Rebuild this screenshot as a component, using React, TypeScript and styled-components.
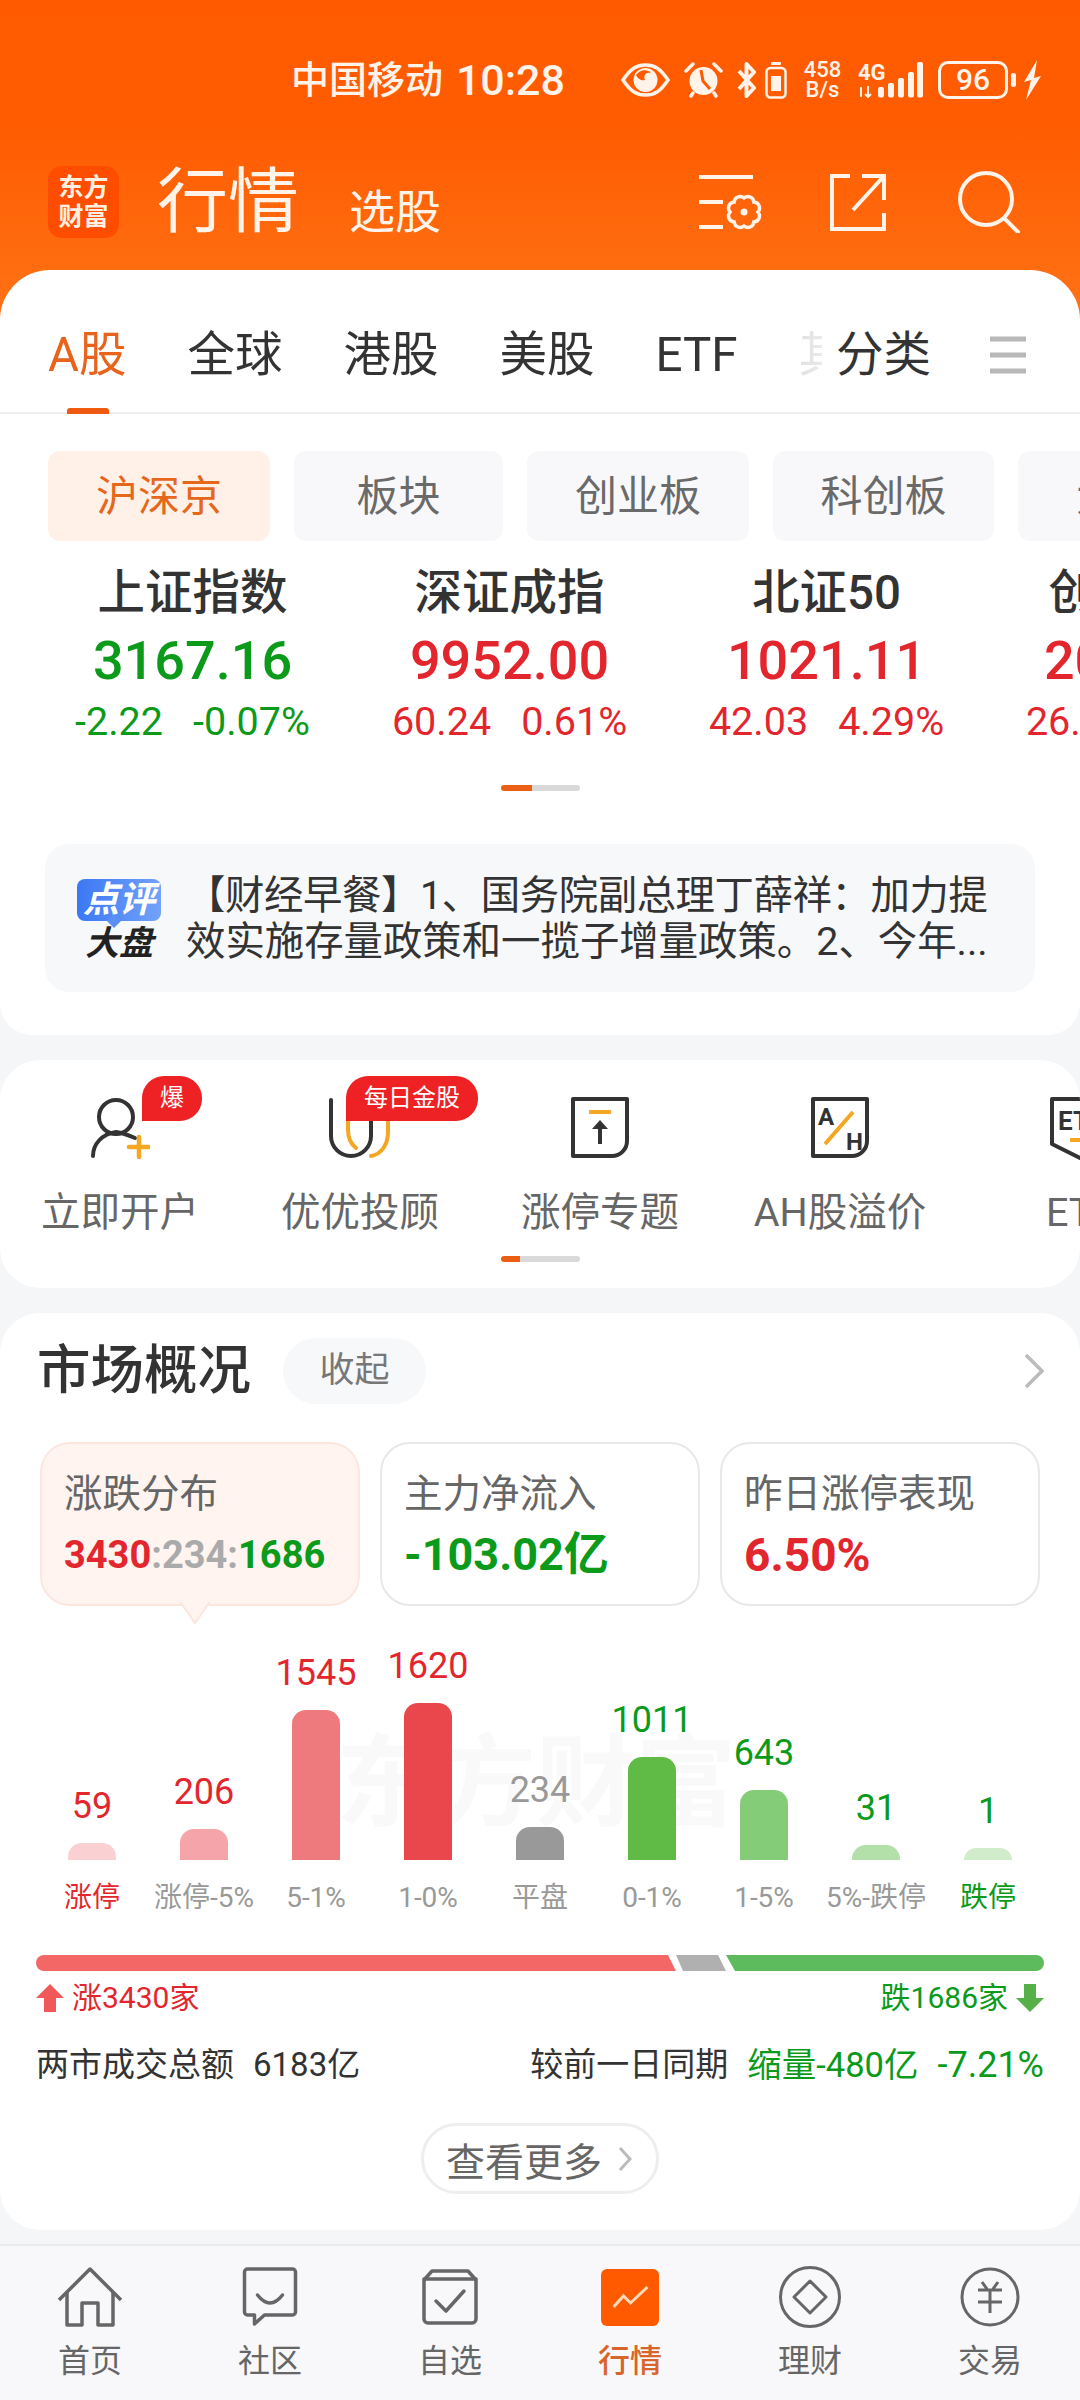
import React from 'react'
import styled, { createGlobalStyle } from 'styled-components'

const RED = '#e3262d'
const GREEN = '#0b9a1a'
const INK = '#333'

const GlobalStyle = createGlobalStyle`
  html, body {
    margin: 0;
    padding: 0;
    background: #f5f6f8;
  }
  body {
    font-family: Roboto, "Noto Sans CJK SC", sans-serif;
  }
`

const Page = styled.div`
  width: 1080px;
  height: 2400px;
  overflow: hidden;
  display: flex;
  flex-direction: column;
  background: linear-gradient(#ff5a00 0, #ff5c02 130px, #ff7417 330px, #f5f6f8 330px);
`

const Header = styled.header`
  height: 270px;
  flex-shrink: 0;
  padding-top: 60px;
  box-sizing: border-box;
`

const StatusBar = styled.div`
  height: 40px;
  display: flex;
  justify-content: flex-end;
  align-items: center;
  padding-right: 38px;
  color: #fff3ea;
`

const Carrier = styled.span`
  font-size: 38px;
  font-weight: 500;
  line-height: 48px;
  white-space: nowrap;
`

const Clock = styled.span`
  font-size: 43px;
  font-weight: 500;
  line-height: 48px;
  margin: 0 56px 0 13px;
  white-space: nowrap;
`

const StatusIcon = styled.svg<{ $ml?: number }>`
  display: block;
  flex-shrink: 0;
  margin-left: ${(p) => p.$ml || 0}px;
`

const Speed = styled.div`
  width: 39px;
  margin-left: 16px;
  font-size: 22px;
  line-height: 20px;
  font-weight: 500;
  text-align: center;
  white-space: nowrap;
`

const BatteryBox = styled.div`
  width: 70px;
  height: 38px;
  margin-left: 14px;
  box-sizing: border-box;
  border: 3px solid #fff3ea;
  border-radius: 10px;
  font-size: 30px;
  font-weight: 500;
  line-height: 32px;
  text-align: center;
  position: relative;

  &::after {
    content: '';
    position: absolute;
    right: -11px;
    top: 9px;
    width: 5px;
    height: 14px;
    border-radius: 2px;
    background: #fff3ea;
  }
`

const Toolbar = styled.div`
  height: 72px;
  margin-top: 66px;
  padding: 0 60px 0 48px;
  display: flex;
  align-items: center;
  color: #fff3ea;
`

const Logo = styled.div`
  width: 71px;
  height: 72px;
  border-radius: 14px;
  background: #ff4d00;
  color: #fff0e0;
  font-size: 25px;
  font-weight: 700;
  line-height: 29px;
  text-align: center;
  display: flex;
  align-items: center;
  justify-content: center;
`

const PageTitle = styled.div`
  margin-left: 38px;
  font-size: 71px;
  line-height: 72px;
  width: 142px;
  white-space: nowrap;
`

const SubTitle = styled.div`
  margin-left: 50px;
  margin-top: 20px;
  font-size: 46px;
  line-height: 54px;
  white-space: nowrap;
`

const ToolIcons = styled.div`
  margin-left: auto;
  display: flex;
  align-items: center;
`

const Sheet = styled.section`
  flex-shrink: 0;
  height: 765px;
  background: #fff;
  border-radius: 50px 50px 32px 32px;
  overflow: hidden;
`

const TabBar = styled.div`
  height: 144px;
  box-sizing: border-box;
  padding: 57px 54px 0 48px;
  border-bottom: 2px solid #eee;
  display: flex;
  align-items: flex-start;
  position: relative;
`

const TabScroll = styled.div`
  width: 774px;
  display: flex;
  gap: 61px;
  overflow: hidden;
  flex-shrink: 0;
  -webkit-mask-image: linear-gradient(to right, #000 730px, rgba(0, 0, 0, 0.15) 752px, rgba(0, 0, 0, 0.1) 774px);
  mask-image: linear-gradient(to right, #000 730px, rgba(0, 0, 0, 0.15) 752px, rgba(0, 0, 0, 0.1) 774px);
`

const Tab = styled.div<{ $active?: boolean }>`
  position: relative;
  font-size: 47.5px;
  line-height: 56px;
  color: ${(p) => (p.$active ? '#e8641c' : INK)};
  white-space: nowrap;
  flex-shrink: 0;
`

const TabUnderline = styled.span`
  position: absolute;
  left: 67px;
  bottom: -2px;
  width: 42px;
  height: 6px;
  border-radius: 3px 3px 0 0;
  background: #ee5a10;
`

const FixedTab = styled(Tab)`
  margin-left: 14px;
`

const TabMenu = styled.svg`
  margin-left: auto;
  margin-top: 9px;
  display: block;
`

const PillRow = styled.div`
  margin-top: 37px;
  padding-left: 48px;
  display: flex;
  gap: 24px;
  overflow: hidden;
`

const Pill = styled.div<{ $active?: boolean; $w: number }>`
  flex-shrink: 0;
  width: ${(p) => p.$w}px;
  height: 90px;
  border-radius: 12px;
  background: ${(p) => (p.$active ? '#fff0e8' : '#f8f8fa')};
  color: ${(p) => (p.$active ? '#e5671a' : '#6a6a6a')};
  font-size: 42px;
  line-height: 92px;
  text-align: center;
  white-space: nowrap;
`

const IndexRow = styled.div`
  margin-top: 22px;
  margin-left: 34px;
  display: flex;
  overflow: hidden;
`

const IndexCol = styled.div`
  width: 317px;
  flex-shrink: 0;
  text-align: center;
  white-space: nowrap;
`

const IndexName = styled.div`
  font-size: 47.5px;
  line-height: 60px;
  font-weight: 500;
  color: ${INK};
`

const IndexValue = styled.div<{ $color: string }>`
  margin-top: 3px;
  font-size: 54px;
  line-height: 70px;
  font-weight: 500;
  color: ${(p) => p.$color};
`

const IndexChange = styled.div<{ $color: string }>`
  margin-top: 4px;
  font-size: 39.5px;
  line-height: 44px;
  color: ${(p) => p.$color};
  display: flex;
  justify-content: center;
  gap: 30px;
`

const Scroller = styled.div<{ $mt: number; $fill: number }>`
  width: 79px;
  height: 6px;
  margin: ${(p) => p.$mt}px auto 0;
  border-radius: 3px;
  background: linear-gradient(
    to right,
    #ea5f14 ${(p) => p.$fill}px,
    #d9d9d9 ${(p) => p.$fill}px
  );
`

const NewsCard = styled.div`
  margin: 53px 45px 0;
  height: 148px;
  border-radius: 24px;
  background: #f7f8fa;
  display: flex;
  padding-left: 32px;
`

const NewsBadge = styled.div`
  width: 84px;
  flex-shrink: 0;
  padding-top: 35px;
`

const NewsBubble = styled.div`
  position: relative;
  height: 42px;
  border-radius: 8px;
  background: linear-gradient(to right, #3c78f5, #72a2f8);
  color: #fff;
  font-size: 36px;
  font-weight: 700;
  font-style: italic;
  line-height: 42px;
  text-align: center;

  &::after {
    content: '';
    position: absolute;
    left: 32px;
    bottom: -5px;
    width: 10px;
    height: 10px;
    background: #5a90f6;
    transform: rotate(45deg);
  }
`

const NewsMarket = styled.div`
  margin-top: 6px;
  color: #222;
  font-size: 34px;
  font-weight: 700;
  font-style: italic;
  line-height: 32px;
  text-align: center;
`

const NewsText = styled.div`
  margin-left: 25px;
  padding-top: 29px;
  width: 810px;
  font-size: 39.4px;
  line-height: 46px;
  color: ${INK};
  white-space: nowrap;
`

const NewsLine = styled.div<{ $tight?: boolean }>`
  letter-spacing: ${(p) => (p.$tight ? '-0.4px' : 0)};
`

const Card = styled.section<{ $mt: number }>`
  margin-top: ${(p) => p.$mt}px;
  flex-shrink: 0;
  background: #fff;
  border-radius: 40px;
  overflow: hidden;
`

const ShortcutCard = styled(Card)`
  padding-bottom: 26px;
`

const ShortcutRow = styled.div`
  display: flex;
  overflow: hidden;
`

const Shortcut = styled.div`
  position: relative;
  width: 240px;
  flex-shrink: 0;
  padding-top: 36px;
  display: flex;
  flex-direction: column;
  align-items: center;
`

const ShortcutIcon = styled.svg`
  display: block;
  height: 64px;
`

const ShortcutLabel = styled.div`
  margin-top: 29px;
  font-size: 39.5px;
  line-height: 48px;
  color: #666;
  white-space: nowrap;
`

const CornerBadge = styled.span<{ $left: number; $w: number }>`
  position: absolute;
  left: ${(p) => p.$left}px;
  top: 16px;
  width: ${(p) => p.$w}px;
  height: 45px;
  border-radius: 22px 22px 22px 0;
  background: #ee2225;
  color: #fff;
  font-size: 24px;
  line-height: 45px;
  text-align: center;
  white-space: nowrap;
`

const SectionHead = styled.div`
  padding: 25px 36px 0 37px;
  height: 66px;
  display: flex;
  align-items: center;
`

const SectionTitle = styled.h2`
  margin: 0;
  font-size: 53.5px;
  font-weight: 500;
  line-height: 66px;
  color: ${INK};
`

const CollapseBtn = styled.div`
  margin-left: 32px;
  width: 143px;
  height: 66px;
  border-radius: 33px;
  background: #f7f8fa;
  color: #777;
  font-size: 35px;
  line-height: 66px;
  text-align: center;
`

const HeadChevron = styled.svg`
  margin-left: auto;
  display: block;
`

const MetricRow = styled.div`
  margin-top: 38px;
  padding: 0 40px;
  display: flex;
  gap: 20px;
`

const Metric = styled.div<{ $active?: boolean }>`
  position: relative;
  width: 320px;
  height: 164px;
  box-sizing: border-box;
  padding: 28px 0 0 22px;
  border-radius: 30px;
  border: 2px solid ${(p) => (p.$active ? '#fbe7de' : '#e8e8e8')};
  background: ${(p) => (p.$active ? '#fff4f0' : '#fff')};

  ${(p) =>
    p.$active &&
    `
    &::after {
      content: '';
      position: absolute;
      left: 140px;
      bottom: -12px;
      width: 24px;
      height: 24px;
      background: #fff4f0;
      border-right: 2px solid #fbe7de;
      border-bottom: 2px solid #fbe7de;
      transform: rotate(45deg) skew(10deg, 10deg);
    }
  `};
`

const MetricTitle = styled.div`
  font-size: 38.5px;
  line-height: 44px;
  color: #666;
  white-space: nowrap;
`

const MetricValue = styled.div<{ $color?: string; $size?: number }>`
  margin-top: 13px;
  font-size: ${(p) => p.$size || 46}px;
  line-height: 52px;
  font-weight: 700;
  color: ${(p) => p.$color || INK};
  white-space: nowrap;
`

const Part = styled.span<{ $color: string }>`
  color: ${(p) => p.$color};
`

const Chart = styled.div`
  position: relative;
  height: 310px;
  padding-left: 36px;
  display: flex;
  align-items: flex-end;
`

const Watermark = styled.div`
  position: absolute;
  left: 336px;
  top: 118px;
  font-size: 100px;
  line-height: 120px;
  font-weight: 700;
  color: #f9f9f9;
  white-space: nowrap;
`

const BarCol = styled.div`
  position: relative;
  width: 112px;
  display: flex;
  flex-direction: column;
  align-items: center;
`

const BarValue = styled.div<{ $color: string }>`
  font-size: 36px;
  line-height: 44px;
  margin-bottom: 15px;
  color: ${(p) => p.$color};
`

const Bar = styled.div<{ $h: number; $color: string }>`
  width: 48px;
  height: ${(p) => p.$h}px;
  border-radius: 14px 14px 0 0;
  background: ${(p) => p.$color};
`

const BarLabel = styled.div<{ $color: string }>`
  margin-top: 20px;
  font-size: 28px;
  line-height: 36px;
  color: ${(p) => p.$color};
  white-space: nowrap;
`

const RatioBar = styled.div`
  position: relative;
  margin: 39px 36px 0;
  height: 16px;
  display: flex;
`

const RatioPart = styled.div<{ $w: number; $color: string; $clip: string; $radius?: string }>`
  width: ${(p) => p.$w}px;
  height: 16px;
  flex-shrink: 0;
  background: ${(p) => p.$color};
  border-radius: ${(p) => p.$radius || 0};
  clip-path: ${(p) => p.$clip};
`

const RatioLabels = styled.div`
  margin: 9px 36px 0;
  display: flex;
  justify-content: space-between;
  font-size: 30px;
  line-height: 36px;
`

const RatioLabel = styled.div<{ $color: string }>`
  display: flex;
  align-items: center;
  gap: 8px;
  color: ${(p) => p.$color};
`

const StatsRow = styled.div`
  margin: 29px 36px 0 36px;
  display: flex;
  justify-content: space-between;
  align-items: center;
  font-size: 33px;
  line-height: 40px;
  color: ${INK};
  white-space: nowrap;
`

const Stat = styled.div`
  display: flex;
  align-items: center;
  gap: 19px;
`

const StatGreen = styled.span<{ $size: number }>`
  font-size: ${(p) => p.$size}px;
  color: ${GREEN};
`

const MoreBtn = styled.div`
  width: 238px;
  height: 71px;
  margin: 38px auto 36px;
  box-sizing: border-box;
  border: 3px solid #eee;
  border-radius: 36px;
  padding-left: 22px;
  display: flex;
  align-items: center;
  gap: 16px;
  color: #666;
  font-size: 39px;
  white-space: nowrap;
`

const BottomNav = styled.nav`
  margin-top: 14px;
  flex: 1;
  display: flex;
  background: #f8f8fa;
  border-top: 2px solid #ebebeb;
  box-sizing: border-box;
  padding-top: 20px;
`

const NavItem = styled.div`
  width: 180px;
  display: flex;
  flex-direction: column;
  align-items: center;
`

const NavIconBox = styled.div`
  height: 62px;
  display: flex;
  align-items: center;
  justify-content: center;
`

const NavLabel = styled.div<{ $active?: boolean }>`
  margin-top: 13px;
  font-size: 32px;
  line-height: 40px;
  font-weight: ${(p) => (p.$active ? 500 : 400)};
  color: ${(p) => (p.$active ? '#d8652a' : '#666')};
`

const ActiveNavIcon = styled.div`
  width: 58px;
  height: 57px;
  border-radius: 6px;
  background: #ff5a00;
`

const tint = '#fff3ea'

const flowerPath = (cx: number, cy: number) => {
  const lobes = 8
  const r = 14
  let d = ''
  for (let i = 0; i <= lobes; i++) {
    const a = (i / lobes) * Math.PI * 2
    const x = (cx + Math.cos(a) * r).toFixed(1)
    const y = (cy + Math.sin(a) * r).toFixed(1)
    d += i === 0 ? `M${x} ${y}` : `A6 6 0 0 1 ${x} ${y}`
  }
  return d + 'Z'
}

const NavHome = () => (
  <svg width="64" height="60" viewBox="0 0 64 60" fill="none" stroke="#666" strokeWidth="3.5" strokeLinejoin="round">
    <path d="M1 33 L32 2 L63 33" />
    <path d="M9 25 V58 H24 V36 H40 V58 H55 V25" />
  </svg>
)

const NavCommunity = () => (
  <svg width="57" height="60" viewBox="0 0 56 60" fill="none" stroke="#666" strokeWidth="3.5" strokeLinejoin="round">
    <path d="M5 2 H50 A3 3 0 0 1 53 5 V45 A3 3 0 0 1 50 48 H22 L12 57 V48 H5 A3 3 0 0 1 2 45 V5 A3 3 0 0 1 5 2Z" />
    <path d="M15 28 Q27.5 44 40 28" strokeLinecap="round" />
  </svg>
)

const NavWatch = () => (
  <svg width="56" height="56" viewBox="0 0 56 56" fill="none" stroke="#666" strokeWidth="3.5" strokeLinejoin="round">
    <path d="M2 10 H54 V50 A4 4 0 0 1 50 54 H6 A4 4 0 0 1 2 50Z" />
    <path d="M2 11 L10 2 H46 L54 11" />
    <path d="M14 32 L24 42 L42 22" strokeLinecap="round" />
  </svg>
)

const NavFinance = () => (
  <svg width="64" height="64" viewBox="-32 -32 64 64" fill="none" stroke="#666" strokeWidth="3">
    <circle r="29.5" />
    <path d="M0 -16 L16 0 L0 16 L-16 0Z" strokeLinejoin="round" />
  </svg>
)

const NavTrade = () => (
  <svg width="60" height="60" viewBox="-30 -30 60 60" fill="none" stroke="#666" strokeWidth="3">
    <circle r="28" />
    <path d="M-8 -15 L-3 -8 M8 -15 L3 -8 M-12 -7 H12 M-12 5 H12 M0 -7 V16" />
  </svg>
)

const bars = [
  { value: '59', h: 17, color: '#fbd0d3', text: RED, label: '涨停', labelColor: RED },
  { value: '206', h: 31, color: '#f5a5a9', text: RED, label: '涨停-5%', labelColor: '#999' },
  { value: '1545', h: 150, color: '#ee7a7e', text: RED, label: '5-1%', labelColor: '#999' },
  { value: '1620', h: 157, color: '#e9474b', text: RED, label: '1-0%', labelColor: '#999' },
  { value: '234', h: 33, color: '#999', text: '#999', label: '平盘', labelColor: '#999' },
  { value: '1011', h: 103, color: '#5fbb46', text: GREEN, label: '0-1%', labelColor: '#999' },
  { value: '643', h: 70, color: '#85cc78', text: GREEN, label: '1-5%', labelColor: '#999' },
  { value: '31', h: 15, color: '#b2e0a8', text: GREEN, label: '5%-跌停', labelColor: '#999' },
  { value: '1', h: 12, color: '#d0eccb', text: GREEN, label: '跌停', labelColor: GREEN },
]

const indexes = [
  { name: '上证指数', value: '3167.16', a: '-2.22', b: '-0.07%', color: GREEN },
  { name: '深证成指', value: '9952.00', a: '60.24', b: '0.61%', color: RED },
  { name: '北证50', value: '1021.11', a: '42.03', b: '4.29%', color: RED },
  { name: '创业板指', value: '2023.48', a: '26.11', b: '1.31%', color: RED },
]

const pills = [
  { label: '沪深京', w: 222, active: true },
  { label: '板块', w: 209 },
  { label: '创业板', w: 222 },
  { label: '科创板', w: 221 },
  { label: '大盘', w: 200 },
]

const App = () => {
  return (
    <Page>
      <GlobalStyle />
      <Header>
        <StatusBar>
          <Carrier>中国移动</Carrier>
          <Clock>10:28</Clock>
          <StatusIcon width="49" height="34" viewBox="0 0 49 34">
            <path d="M2 17 C10 5 16 2 24.5 2 C33 2 39 5 47 17 C39 29 33 32 24.5 32 C16 32 10 29 2 17Z" fill="none" stroke={tint} strokeWidth="3.5" />
            <circle cx="24.5" cy="17" r="12" fill={tint} />
            <path d="M15 12 C19 6 27 6 30 10 C25 9 22 12 24 17 C20 18 17 16 15 12Z" fill="#ff5a00" />
          </StatusIcon>
          <StatusIcon $ml={14} width="39" height="36" viewBox="0 0 39 36">
            <circle cx="19.5" cy="19" r="14" fill={tint} />
            <path d="M17 8 L19 19 L26 27" fill="none" stroke="#ff5a00" strokeWidth="3" />
            <path d="M2 9 L9 2 M37 9 L30 2 M7 34 L9 31 M32 34 L30 31" stroke={tint} strokeWidth="3.5" strokeLinecap="round" />
          </StatusIcon>
          <StatusIcon $ml={14} width="19" height="36" viewBox="0 0 19 36">
            <path d="M2 9 L17 26 L9.5 34 V2 L17 10 L2 27" fill="none" stroke={tint} strokeWidth="4" strokeLinejoin="round" />
          </StatusIcon>
          <StatusIcon $ml={9} width="22" height="37" viewBox="0 0 22 37">
            <rect x="6" y="0" width="10" height="3" rx="1" fill={tint} />
            <rect x="1.5" y="6" width="19" height="29.5" rx="4" fill="none" stroke={tint} strokeWidth="2.5" />
            <rect x="6" y="14" width="10" height="15" fill={tint} />
          </StatusIcon>
          <Speed>
            458
            <br />
            B/s
          </Speed>
          <StatusIcon $ml={16} width="66" height="36" viewBox="0 0 66 36">
            <text x="0" y="18" fontSize="22" fontWeight="700" fill={tint} fontFamily="Roboto, sans-serif">
              4G
            </text>
            <path d="M3 25 V35 M10 24 V35 M7 32 L10 35 L13 32" stroke={tint} strokeWidth="2" fill="none" />
            <rect x="20" y="25" width="6" height="10.5" rx="2" fill={tint} />
            <rect x="30" y="21" width="6" height="14.5" rx="2" fill={tint} />
            <rect x="40" y="16" width="6" height="19.5" rx="2" fill={tint} />
            <rect x="50" y="10" width="6" height="25.5" rx="2" fill={tint} />
            <rect x="59" y="0" width="6" height="35.5" rx="2" fill={tint} />
          </StatusIcon>
          <BatteryBox>96</BatteryBox>
          <StatusIcon $ml={15} width="19" height="40" viewBox="0 0 19 40">
            <path d="M14 0 L1 22 L8 20 L3 40 L18 16 L11 18Z" fill={tint} />
          </StatusIcon>
        </StatusBar>
        <Toolbar>
          <Logo>
            东方
            <br />
            财富
          </Logo>
          <PageTitle>行情</PageTitle>
          <SubTitle>选股</SubTitle>
          <ToolIcons>
            <svg width="67" height="56" viewBox="0 0 67 56" fill="none" stroke={tint} strokeWidth="4">
              <path d="M1 3 H55 M1 28 H25 M1 53 H25" />
              <path d={flowerPath(46, 38)} strokeWidth="3.5" />
              <circle cx="46" cy="38" r="3.5" fill={tint} stroke="none" />
            </svg>
            <svg style={{ marginLeft: 65 }} width="56" height="57" viewBox="0 0 56 57" fill="none" stroke={tint} strokeWidth="4">
              <path d="M20 2 H2 V55 H54 V39" />
              <path d="M32 2 H54 V26 M54 2 L23 36" />
            </svg>
            <svg style={{ marginLeft: 72 }} width="62" height="62" viewBox="0 0 62 62" fill="none" stroke={tint} strokeWidth="4">
              <circle cx="28" cy="28" r="26" />
              <path d="M46 47 L60 61" strokeLinecap="round" />
            </svg>
          </ToolIcons>
        </Toolbar>
      </Header>

      <Sheet>
        <TabBar>
          <TabScroll>
            <Tab $active>A股</Tab>
            <Tab>全球</Tab>
            <Tab>港股</Tab>
            <Tab>美股</Tab>
            <Tab>ETF</Tab>
            <Tab>其他</Tab>
          </TabScroll>
          <FixedTab>分类</FixedTab>
          <TabMenu width="36" height="38" viewBox="0 0 36 38" stroke="#b8b8b8" strokeWidth="5">
            <path d="M0 3 H36 M0 19 H36 M0 35 H36" />
          </TabMenu>
          <TabUnderline />
        </TabBar>
        <PillRow>
          {pills.map((p) => (
            <Pill key={p.label} $w={p.w} $active={p.active}>
              {p.label}
            </Pill>
          ))}
        </PillRow>
        <IndexRow>
          {indexes.map((i) => (
            <IndexCol key={i.name}>
              <IndexName>{i.name}</IndexName>
              <IndexValue $color={i.color}>{i.value}</IndexValue>
              <IndexChange $color={i.color}>
                <span>{i.a}</span>
                <span>{i.b}</span>
              </IndexChange>
            </IndexCol>
          ))}
        </IndexRow>
        <Scroller $mt={41} $fill={31} />
        <NewsCard>
          <NewsBadge>
            <NewsBubble>点评</NewsBubble>
            <NewsMarket>大盘</NewsMarket>
          </NewsBadge>
          <NewsText>
            <NewsLine $tight>【财经早餐】1、国务院副总理丁薛祥：加力提</NewsLine>
            <NewsLine>效实施存量政策和一揽子增量政策。2、今年...</NewsLine>
          </NewsText>
        </NewsCard>
      </Sheet>

      <ShortcutCard $mt={25}>
        <ShortcutRow>
          <Shortcut>
            <ShortcutIcon width="60" viewBox="0 0 60 64" fill="none" stroke={INK} strokeWidth="4" strokeLinecap="round">
              <circle cx="26" cy="21" r="17" />
              <path d="M3 60 C3 48 12 38 26 36 C33 37 38 39 45 42" />
              <path d="M49 41 V61 M39 51 H59" stroke="#f5a623" strokeWidth="4.5" />
            </ShortcutIcon>
            <CornerBadge $left={142} $w={60}>
              爆
            </CornerBadge>
            <ShortcutLabel>立即开户</ShortcutLabel>
          </Shortcut>
          <Shortcut>
            <ShortcutIcon width="64" viewBox="0 0 64 64" fill="none" stroke={INK} strokeWidth="4" strokeLinecap="round">
              <path d="M20 20 V34 C20 42 23 48 28 52 M60 20 V36 C60 48 54 58 43 60" stroke="#f5a623" />
              <path d="M3 4 V40 A20 20 0 0 0 43 40 V20" />
            </ShortcutIcon>
            <CornerBadge $left={106} $w={132}>
              每日金股
            </CornerBadge>
            <ShortcutLabel>优优投顾</ShortcutLabel>
          </Shortcut>
          <Shortcut>
            <ShortcutIcon width="58" viewBox="0 0 58 64" fill="none" stroke={INK} strokeWidth="4">
              <path d="M2 3 H56 V45 A15 15 0 0 1 41 60 H2Z" strokeLinejoin="round" />
              <path d="M18 16 H40" stroke="#f5a623" />
              <path d="M29 48 V30" />
              <path d="M21 33 L29 24 L37 33Z" fill={INK} stroke="none" />
            </ShortcutIcon>
            <ShortcutLabel>涨停专题</ShortcutLabel>
          </Shortcut>
          <Shortcut>
            <ShortcutIcon width="58" viewBox="0 0 58 64" fill="none" stroke={INK} strokeWidth="4">
              <path d="M2 3 H56 V45 A15 15 0 0 1 41 60 H2Z" strokeLinejoin="round" />
              <path d="M14 48 L42 16" stroke="#f5a623" />
              <text x="7" y="29" fontSize="24" fontWeight="700" fill={INK} stroke="none" fontFamily="Roboto, sans-serif">
                A
              </text>
              <text x="35" y="54" fontSize="24" fontWeight="700" fill={INK} stroke="none" fontFamily="Roboto, sans-serif">
                H
              </text>
            </ShortcutIcon>
            <ShortcutLabel>AH股溢价</ShortcutLabel>
          </Shortcut>
          <Shortcut>
            <ShortcutIcon width="60" viewBox="0 0 60 64" fill="none" stroke={INK} strokeWidth="4">
              <path d="M2 3 H58 V48 L30 62 L2 48Z" strokeLinejoin="round" />
              <text x="8" y="34" fontSize="26" fontWeight="700" fill={INK} stroke="none" fontFamily="Roboto, sans-serif">
                ET
              </text>
              <path d="M20 44 H40" stroke="#f5a623" />
            </ShortcutIcon>
            <ShortcutLabel>ETF</ShortcutLabel>
          </Shortcut>
        </ShortcutRow>
        <Scroller $mt={19} $fill={19} />
      </ShortcutCard>

      <Card $mt={25}>
        <SectionHead>
          <SectionTitle>市场概况</SectionTitle>
          <CollapseBtn>收起</CollapseBtn>
          <HeadChevron width="20" height="36" viewBox="0 0 20 36" fill="none" stroke="#bbb" strokeWidth="3.5">
            <path d="M2 2 L18 18 L2 34" />
          </HeadChevron>
        </SectionHead>
        <MetricRow>
          <Metric $active>
            <MetricTitle>涨跌分布</MetricTitle>
            <MetricValue $size={38}>
              <Part $color={RED}>3430</Part>
              <Part $color="#aaa">:234:</Part>
              <Part $color={GREEN}>1686</Part>
            </MetricValue>
          </Metric>
          <Metric>
            <MetricTitle>主力净流入</MetricTitle>
            <MetricValue $color={GREEN} $size={45}>
              -103.02亿
            </MetricValue>
          </Metric>
          <Metric>
            <MetricTitle>昨日涨停表现</MetricTitle>
            <MetricValue $color={RED}>6.50%</MetricValue>
          </Metric>
        </MetricRow>
        <Chart>
          <Watermark>东方财富</Watermark>
          {bars.map((b) => (
            <BarCol key={b.label}>
              <BarValue $color={b.text}>{b.value}</BarValue>
              <Bar $h={b.h} $color={b.color} />
              <BarLabel $color={b.labelColor}>{b.label}</BarLabel>
            </BarCol>
          ))}
        </Chart>
        <RatioBar>
          <RatioPart $w={640} $color="#f46767" $radius="8px 0 0 8px" $clip="polygon(0 0, 632px 0, 640px 100%, 0 100%)" />
          <RatioPart $w={50} $color="#b0b0b0" $clip="polygon(0 0, 42px 0, 50px 100%, 7px 100%)" />
          <RatioPart $w={318} $color="#5dbb5e" $radius="0 8px 8px 0" $clip="polygon(0 0, 100% 0, 100% 100%, 9px 100%)" />
        </RatioBar>
        <RatioLabels>
          <RatioLabel $color={RED}>
            <svg width="28" height="28" viewBox="0 0 28 28" fill="#f0585a">
              <path d="M14 0 L28 14 H20 V28 H8 V14 H0Z" />
            </svg>
            涨3430家
          </RatioLabel>
          <RatioLabel $color={GREEN}>
            跌1686家
            <svg width="28" height="28" viewBox="0 0 28 28" fill="#55b04a">
              <path d="M8 0 H20 V14 H28 L14 28 L0 14 H8Z" />
            </svg>
          </RatioLabel>
        </RatioLabels>
        <StatsRow>
          <Stat>
            <span>两市成交总额</span>
            <span>6183亿</span>
          </Stat>
          <Stat>
            <span>较前一日同期</span>
            <StatGreen $size={34.5}>缩量-480亿</StatGreen>
            <StatGreen $size={36}>-7.21%</StatGreen>
          </Stat>
        </StatsRow>
        <MoreBtn>
          查看更多
          <svg width="14" height="26" viewBox="0 0 14 26" fill="none" stroke="#bbb" strokeWidth="3">
            <path d="M2 2 L12 13 L2 24" />
          </svg>
        </MoreBtn>
      </Card>

      <BottomNav>
        <NavItem>
          <NavIconBox>
            <NavHome />
          </NavIconBox>
          <NavLabel>首页</NavLabel>
        </NavItem>
        <NavItem>
          <NavIconBox>
            <NavCommunity />
          </NavIconBox>
          <NavLabel>社区</NavLabel>
        </NavItem>
        <NavItem>
          <NavIconBox>
            <NavWatch />
          </NavIconBox>
          <NavLabel>自选</NavLabel>
        </NavItem>
        <NavItem>
          <NavIconBox>
            <ActiveNavIcon>
              <svg width="58" height="57" viewBox="0 0 55 57" fill="none" stroke="#ffd9b8" strokeWidth="3">
                <path d="M11 38 L21 27 L28 34 L45 18" />
              </svg>
            </ActiveNavIcon>
          </NavIconBox>
          <NavLabel $active>行情</NavLabel>
        </NavItem>
        <NavItem>
          <NavIconBox>
            <NavFinance />
          </NavIconBox>
          <NavLabel>理财</NavLabel>
        </NavItem>
        <NavItem>
          <NavIconBox>
            <NavTrade />
          </NavIconBox>
          <NavLabel>交易</NavLabel>
        </NavItem>
      </BottomNav>
    </Page>
  )
}

export default App
